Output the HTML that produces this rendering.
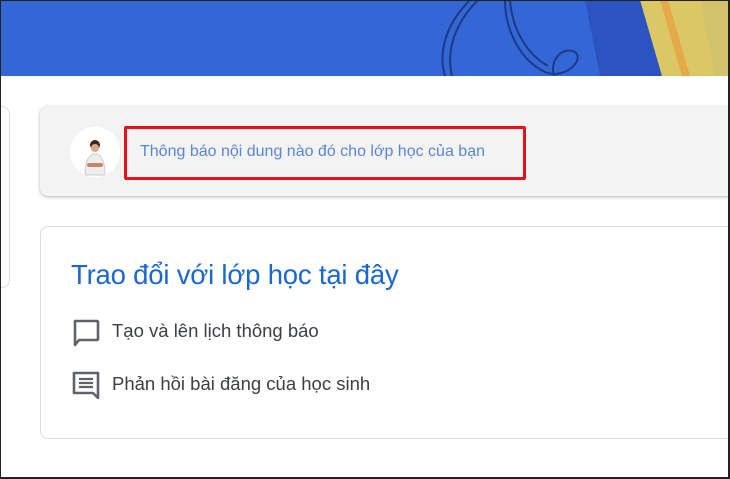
<!DOCTYPE html>
<html><head><meta charset="utf-8"><style>
*{margin:0;padding:0;box-sizing:border-box}
body{width:730px;height:479px;overflow:hidden;background:#fff;font-family:"Liberation Sans",Arial,sans-serif;position:relative}
.frame{position:absolute;left:0;top:0;width:730px;height:479px;border:1px solid #222;border-right-width:2px;border-bottom-width:2px;pointer-events:none;z-index:10}
.banner{position:absolute;left:0;top:0;width:730px;height:76px;background:#3367d6;overflow:hidden}
.side{position:absolute;left:-10px;top:106px;width:20px;height:182px;border:1px solid #dadce0;border-radius:8px}
.ann{position:absolute;left:40px;top:106px;width:700px;height:90px;background:#f3f3f3;border-radius:8px;box-shadow:0 1px 3px rgba(0,0,0,.3)}
.av{position:absolute;left:70px;top:127px;width:50px;height:50px;border-radius:50%;background:#fff;overflow:hidden}
.red{position:absolute;left:124px;top:126px;width:402px;height:54px;border:3px solid #e8101a;border-radius:2px}
.at{position:absolute;left:140px;top:143px;font-size:16px;color:#5a86d8}
.card{position:absolute;left:40px;top:226px;width:700px;height:213px;border:1px solid #dadce0;border-radius:8px}
.title{position:absolute;left:71px;top:259px;font-size:27.5px;color:#1a67d2;letter-spacing:-.2px}
.it{position:absolute;left:112px;font-size:18.5px;color:#3c4043}
svg.ic{position:absolute;left:72px}
</style></head><body>
<div class="banner">
<svg width="730" height="76" viewBox="0 0 730 76">
<polygon points="585,0 645,0 663,76 600,76" fill="#2b54c0"/>
<polygon points="640,0 730,0 730,76 662,76" fill="#dcc766"/>
<polygon points="660,0 668,0 690,76 682,76" fill="#e4a948"/>
<polygon points="700,0 730,0 730,76 715,76" fill="#cbbf6e" opacity=".6"/>
<path d="M470,0 C440,30 440,60 445,76 M478,0 C448,30 448,60 452,76" stroke="#1c3a85" stroke-width="2" fill="none"/>
<path d="M505,0 C505,30 520,60 545,72 C565,80 585,60 575,52 C560,45 548,65 555,76 M510,0 C512,30 528,55 548,66" stroke="#1c3a85" stroke-width="2" fill="none"/>
</svg>
</div>
<div class="side"></div>
<div class="ann"></div>
<div class="av"><svg width="50" height="50"><circle cx="25" cy="18" r="5" fill="#3a2a22"/><circle cx="25" cy="21" r="4" fill="#d9a98a"/><path d="M15,48 C15,32 20,27 25,27 C30,27 35,32 35,48Z" fill="#eee" stroke="#ccc"/><rect x="17" y="36" width="16" height="4" rx="2" fill="#c48a66"/></svg></div>
<div class="red"></div>
<div class="at">Thông báo nội dung nào đó cho lớp học của bạn</div>
<div class="card"></div>
<div class="title">Trao đổi với lớp học tại đây</div>
<svg class="ic" style="top:319px" width="28" height="28" viewBox="0 0 28 28"><path d="M3,2 H25 a1,1 0 0 1 1,1 V20 a1,1 0 0 1 -1,1 H7 L3,26 Z" fill="none" stroke="#5f6368" stroke-width="2.6" stroke-linejoin="round"/></svg>
<div class="it" style="top:320px">Tạo và lên lịch thông báo</div>
<svg class="ic" style="top:371px" width="28" height="28" viewBox="0 0 28 28"><path d="M2,2 H26 V22 L26,27 L21,22 H2 Z" fill="none" stroke="#5f6368" stroke-width="2.6" stroke-linejoin="round"/><path d="M7,8 H21 M7,12 H21 M7,16 H21" stroke="#5f6368" stroke-width="2.2"/></svg>
<div class="it" style="top:373px">Phản hồi bài đăng của học sinh</div>
<div class="frame"></div>
</body></html>
